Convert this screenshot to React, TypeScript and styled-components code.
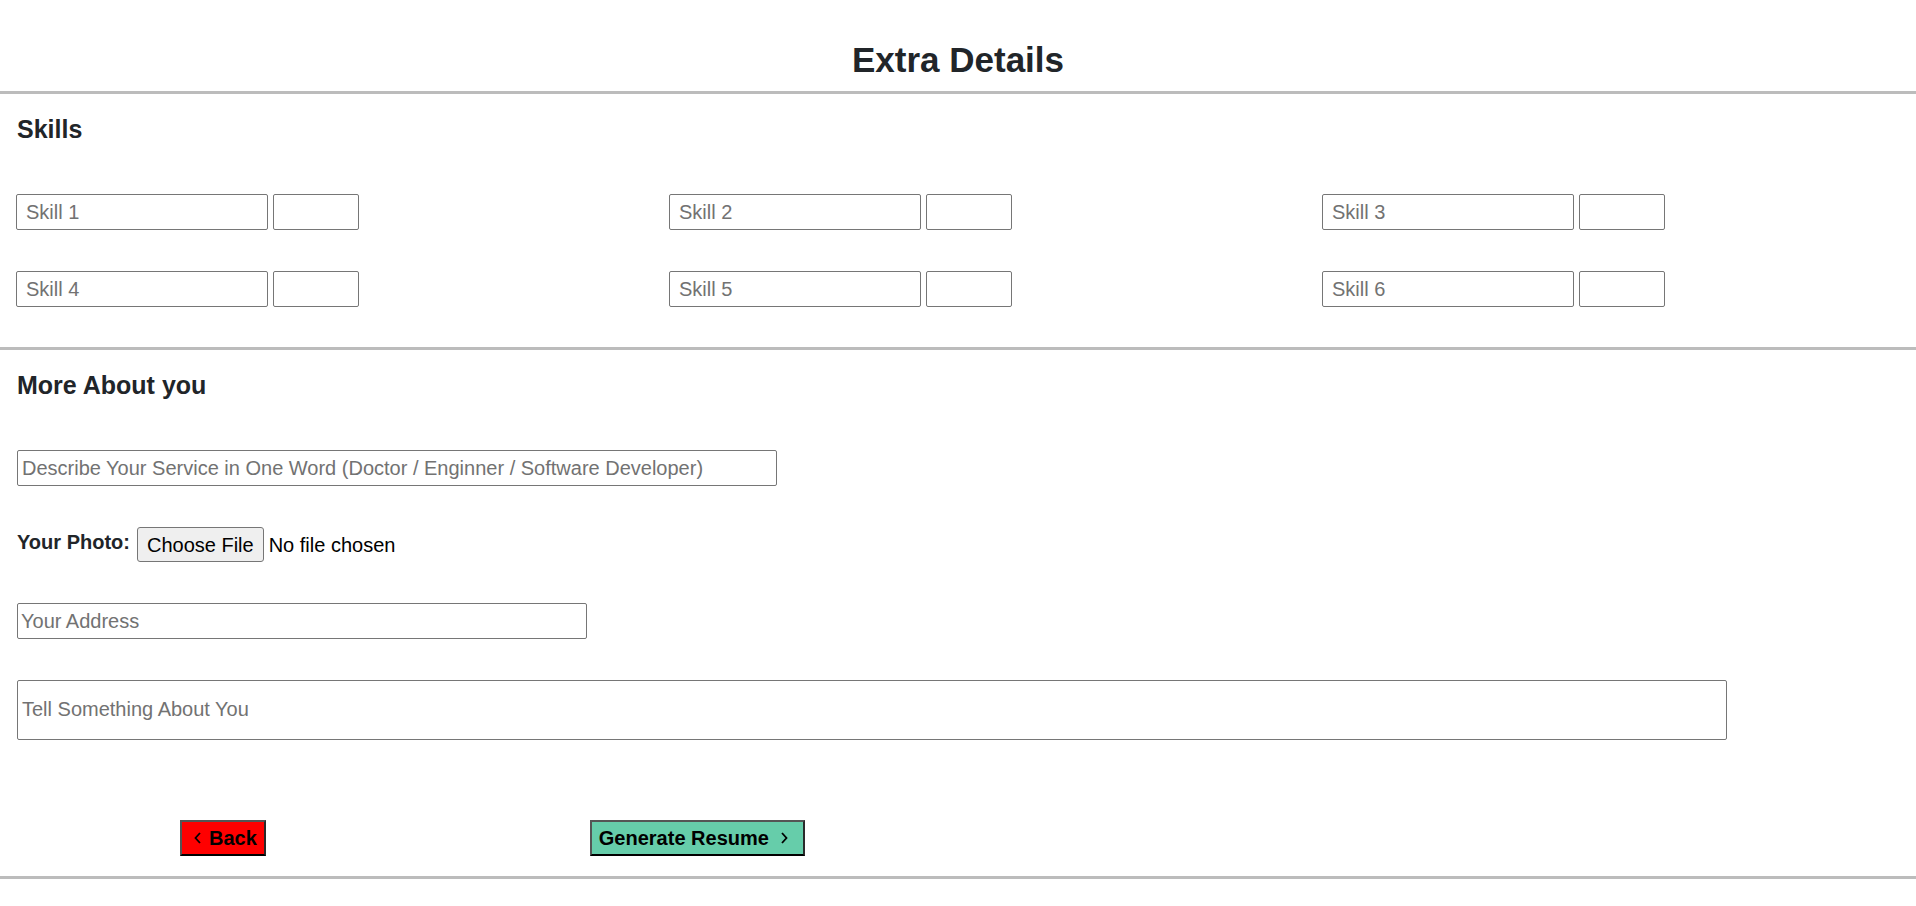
import React from "react";
import styled, { createGlobalStyle } from "styled-components";

const GlobalStyle = createGlobalStyle`
  html, body { margin: 0; padding: 0; background: #fff; }
  body {
    font-family: "Liberation Sans", Arial, sans-serif;
    color: #212529;
    overflow-x: hidden;
  }
  * { box-sizing: border-box; }
`;

const Page = styled.div`
  padding-top: 40px;
  display: flex;
  flex-direction: column;
`;

const Title = styled.h1`
  margin: 0;
  font-size: 35px;
  line-height: 40px;
  font-weight: 700;
  text-align: center;
  color: #212529;
`;

const Divider = styled.div<{ $top: number }>`
  height: 3px;
  background: #bcbcbc;
  margin-top: ${(p) => p.$top}px;
`;

const SectionTitle = styled.h3`
  margin: 21px 0 1px 17px;
  font-size: 25px;
  line-height: 28px;
  font-weight: 700;
  color: #212529;
`;

const SkillsGrid = styled.div`
  margin-top: 50px;
  padding-left: 16px;
  display: grid;
  grid-template-columns: 653px 653px 1fr;
  grid-auto-rows: 36px;
  row-gap: 41px;
`;

const SkillPair = styled.div`
  display: flex;
  gap: 5px;
`;

const TextField = styled.input<{ $w: number; $pad?: number }>`
  width: ${(p) => p.$w}px;
  height: 36px;
  padding: 0 ${(p) => p.$pad ?? 9}px;
  border: 1px solid #767676;
  border-radius: 2px;
  font-family: "Liberation Sans", Arial, sans-serif;
  font-size: 20px;
  color: #212529;
  background: #fff;
  outline: none;
  &::placeholder { color: #727272; }
`;

const Stack = styled.div`
  margin-top: 50px;
  padding-left: 17px;
  display: flex;
  flex-direction: column;
  align-items: flex-start;
  gap: 41px;
`;

const PhotoRow = styled.div`
  display: flex;
  align-items: flex-start;
`;

const PhotoLabel = styled.label`
  margin-top: 4px;
  margin-right: 7px;
  font-size: 20px;
  line-height: 22px;
  font-weight: 700;
  color: #212529;
`;

const FileInput = styled.input`
  font-family: "Liberation Sans", Arial, sans-serif;
  font-size: 20px;
  color: #000;
  height: 35px;
  line-height: 35px;
  &::file-selector-button {
    font: inherit;
    height: 35px;
    padding: 0 9px;
    margin-right: 5px;
    border: 1px solid #767676;
    border-radius: 3px;
    background: #efefef;
    color: #000;
  }
`;

const AboutArea = styled.textarea`
  width: 1710px;
  height: 60px;
  padding: 17px 4px 0;
  border: 1px solid #767676;
  border-radius: 2px;
  font-family: "Liberation Sans", Arial, sans-serif;
  font-size: 20px;
  line-height: 22px;
  resize: none;
  overflow: hidden;
  outline: none;
  &::placeholder { color: #727272; }
`;

const ButtonBar = styled.div`
  margin-top: 80px;
  padding-left: 180px;
  display: flex;
  gap: 324px;
`;

const NavButton = styled.button<{ $bg: string }>`
  height: 36px;
  padding: 0 7px;
  display: inline-flex;
  align-items: center;
  background: ${(p) => p.$bg};
  border-style: solid;
  border-width: 2px;
  border-color: #555 #2a2a2a #000 #555;
  font-family: "Liberation Sans", Arial, sans-serif;
  font-size: 20px;
  font-weight: 700;
  color: #000;
  cursor: pointer;
`;

const Chevron = styled.svg<{ $ml: number; $mr: number }>`
  width: 7px;
  height: 12px;
  margin-left: ${(p) => p.$ml}px;
  margin-right: ${(p) => p.$mr}px;
  flex-shrink: 0;
`;

const skills = [1, 2, 3, 4, 5, 6];

export default function App() {
  return (
    <>
      <GlobalStyle />
      <Page>
        <Title>Extra Details</Title>
        <Divider $top={11} />

        <SectionTitle>Skills</SectionTitle>
        <SkillsGrid>
          {skills.map((n) => (
            <SkillPair key={n}>
              <TextField $w={252} placeholder={`Skill ${n}`} />
              <TextField $w={86} />
            </SkillPair>
          ))}
        </SkillsGrid>
        <Divider $top={40} />

        <SectionTitle>More About you</SectionTitle>
        <Stack>
          <TextField
            $w={760}
            $pad={4}
            placeholder="Describe Your Service in One Word (Doctor / Enginner / Software Developer)"
          />
          <PhotoRow>
            <PhotoLabel htmlFor="photo">Your Photo:</PhotoLabel>
            <FileInput id="photo" type="file" />
          </PhotoRow>
          <TextField $w={570} $pad={3} placeholder="Your Address" />
          <AboutArea placeholder="Tell Something About You" />
        </Stack>

        <ButtonBar>
          <NavButton $bg="#ff0000">
            <Chevron viewBox="0 0 7 12" $ml={5} $mr={8}>
              <polyline points="6,1 1.5,6 6,11" fill="none" stroke="#000" strokeWidth="1.8" />
            </Chevron>
            Back
          </NavButton>
          <NavButton $bg="#66cdaa">
            Generate Resume
            <Chevron viewBox="0 0 7 12" $ml={12} $mr={8}>
              <polyline points="1,1 5.5,6 1,11" fill="none" stroke="#000" strokeWidth="1.8" />
            </Chevron>
          </NavButton>
        </ButtonBar>
        <Divider $top={20} />
      </Page>
    </>
  );
}
